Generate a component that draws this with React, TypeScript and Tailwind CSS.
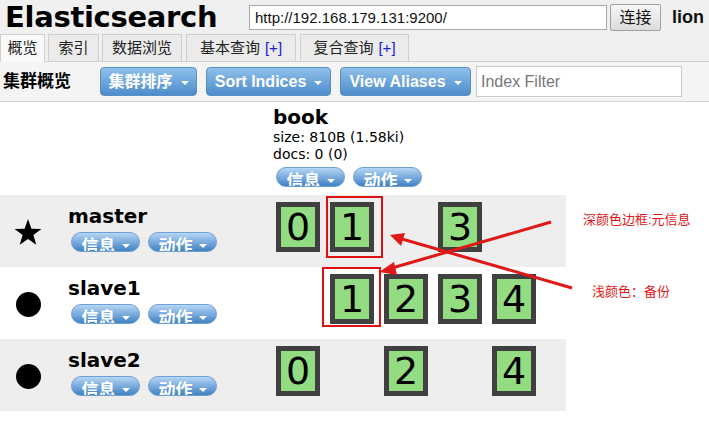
import React from "react";

const cjk = "font-['Liberation_Sans','Noto_Sans_CJK_SC',sans-serif]";
const dv = "font-['DejaVu_Sans','Noto_Sans_CJK_SC',sans-serif]";

function BlueButton({ label, w }: { label: string; w: string }) {
  return (
    <div
      className={`${w} h-[29px] flex items-center justify-center gap-2 rounded-[4px] border border-[#5b8fc2] bg-gradient-to-b from-[#8ec0ea] to-[#4d8ccb] text-white text-[16px] font-bold ${cjk}`}
    >
      <span>{label}</span>
      <span className="w-0 h-0 border-x-[4px] border-x-transparent border-t-[4px] border-t-white mt-[2px]" />
    </div>
  );
}

function Pill({ label }: { label: string }) {
  return (
    <div className="w-[69px] h-[20px] overflow-hidden rounded-full border border-[#6d9fd2] bg-gradient-to-b from-[#b5d6f5] to-[#3f82c3] flex items-start justify-center gap-[6px] pt-[4px]">
      <span className={`text-white text-[17px] leading-[20px] font-bold ${cjk}`}>{label}</span>
      <span className="w-0 h-0 border-x-[4px] border-x-transparent border-t-[4px] border-t-white mt-[7px]" />
    </div>
  );
}

function Shard({ n }: { n?: number }) {
  if (n === undefined) return <div className="w-[54px]" />;
  return (
    <div className="w-[54px] pl-[5px]">
      <div className="w-[44px] h-[50px] border-[5px] border-[#404040] bg-[#93dc82] flex items-start justify-center">
        <span className={`text-[38px] leading-[40px] text-black ${dv}`}>{n}</span>
      </div>
    </div>
  );
}

function NodeRow({ name, icon, shards, gray }: { name: string; icon: "star" | "dot"; shards: (number | undefined)[]; gray?: boolean }) {
  return (
    <div className={`flex h-[72px] ${gray ? "bg-[#eeeeee]" : "bg-white"}`}>
      <div className="w-[56px] flex items-center justify-center pt-[2px]">
        {icon === "star" ? (
          <svg width="28" height="27" viewBox="0 0 24 23">
            <polygon points="12,0 14.9,8.2 23.5,8.4 16.6,13.6 19.1,22 12,17 4.9,22 7.4,13.6 0.5,8.4 9.1,8.2" fill="#000" />
          </svg>
        ) : (
          <div className="w-[25px] h-[25px] rounded-full bg-black" />
        )}
      </div>
      <div className="w-[215px] pl-[12px] pt-[9px]">
        <div className={`text-[20px] leading-[24px] font-bold text-black ${dv}`}>{name}</div>
        <div className="flex gap-[8px] mt-[4px] pl-[3px]">
          <Pill label="信息" />
          <Pill label="动作" />
        </div>
      </div>
      <div className="flex pt-[7px]">
        {shards.map((s, i) => (
          <Shard key={i} n={s} />
        ))}
      </div>
    </div>
  );
}

export default function App() {
  return (
    <div className="relative w-[709px] h-[438px] overflow-hidden bg-white">
      <div className="bg-[#f0f0f0] w-[900px]">
        <div className="flex items-center h-[34px]">
          <div className={`pl-[5px] w-[249px] text-[29px] leading-[33px] font-bold tracking-[-0.3px] text-black ${dv}`}>Elasticsearch</div>
          <div className={`w-[358px] h-[25px] border border-[#a9a9a9] bg-white px-[5px] text-[15px] leading-[23px] text-[#111] ${cjk}`}>
            http://192.168.179.131:9200/
          </div>
          <div className={`ml-[3px] w-[51px] h-[27px] border border-[#a0a0a0] rounded-[2px] bg-gradient-to-b from-[#f6f6f6] to-[#dcdcdc] text-[16px] leading-[25px] text-center text-[#111] ${cjk}`}>
            连接
          </div>
          <div className={`ml-[11px] text-[18px] font-bold text-[#111] ${cjk}`}>lion</div>
        </div>
        <div className={`flex items-end gap-[3px] h-[28px] border-b border-[#cfcfcf] text-[15px] text-[#222] ${cjk}`}>
          <div className="w-[45px] h-[28px] bg-[#fafafa] border border-b-0 border-[#cfcfcf] flex items-center justify-center -mb-px">概览</div>
          <div className="w-[51px] h-[27px] bg-[#ebebeb] border border-b-0 border-[#cfcfcf] flex items-center justify-center">索引</div>
          <div className="w-[80px] h-[27px] bg-[#ebebeb] border border-b-0 border-[#cfcfcf] flex items-center justify-center">数据浏览</div>
          <div className="ml-[1px] w-[110px] h-[27px] bg-[#ebebeb] border border-b-0 border-[#cfcfcf] flex items-center justify-center gap-[5px]">
            基本查询 <span className="text-[#2020d0]">[+]</span>
          </div>
          <div className="ml-[1px] w-[109px] h-[27px] bg-[#ebebeb] border border-b-0 border-[#cfcfcf] flex items-center justify-center gap-[5px]">
            复合查询 <span className="text-[#2020d0]">[+]</span>
          </div>
        </div>
        <div className="flex items-center h-[40px] bg-[#f4f4f4] border-b border-[#d5d5d5]">
          <div className={`w-[100px] pl-[3px] text-[17px] font-bold text-black ${cjk}`}>集群概览</div>
          <BlueButton label="集群排序" w="w-[97px]" />
          <div className="w-[9px]" />
          <BlueButton label="Sort Indices" w="w-[125px]" />
          <div className="w-[9px]" />
          <BlueButton label="View Aliases" w="w-[131px]" />
          <div className={`ml-[5px] w-[206px] h-[31px] border border-[#c8c8c8] bg-white px-[4px] text-[16px] leading-[29px] text-[#777] ${cjk}`}>
            Index Filter
          </div>
        </div>
      </div>

      <div className="w-[566px]">
        <div className="flex h-[93px]">
          <div className="w-[273px]" />
          <div className="pt-[3px]">
            <div className={`text-[20px] leading-[24px] font-bold text-black ${dv}`}>book</div>
            <div className={`text-[14px] leading-[17px] text-black ${dv}`}>size: 810B (1.58ki)</div>
            <div className={`text-[14px] leading-[17px] text-black ${dv}`}>docs: 0 (0)</div>
            <div className="flex gap-[8px] mt-[4px] pl-[3px]">
              <Pill label="信息" />
              <Pill label="动作" />
            </div>
          </div>
        </div>
        <NodeRow name="master" icon="star" gray shards={[0, 1, undefined, 3, undefined]} />
        <NodeRow name="slave1" icon="dot" shards={[undefined, 1, 2, 3, 4]} />
        <NodeRow name="slave2" icon="dot" gray shards={[0, undefined, 2, undefined, 4]} />
      </div>

      <svg className="absolute left-0 top-0 pointer-events-none" width="709" height="438">
        <rect x="327" y="197" width="55" height="60" fill="none" stroke="#dd1111" strokeWidth="2" />
        <rect x="323" y="268" width="57" height="58" fill="none" stroke="#dd1111" strokeWidth="2" />
        <line x1="551" y1="222" x2="392" y2="268" stroke="#e01818" strokeWidth="3" />
        <polygon points="379,272 394,262 397,275" fill="#e01818" />
        <line x1="572" y1="288" x2="402" y2="239" stroke="#e01818" strokeWidth="3" />
        <polygon points="390,235 405,233 401,246" fill="#e01818" />
      </svg>
      <div className={`absolute left-[583px] top-[210px] text-[13px] text-[#e01818] ${cjk}`}>深颜色边框:元信息</div>
      <div className={`absolute left-[592px] top-[282px] text-[13px] text-[#e01818] ${cjk}`}>浅颜色：备份</div>
    </div>
  );
}
